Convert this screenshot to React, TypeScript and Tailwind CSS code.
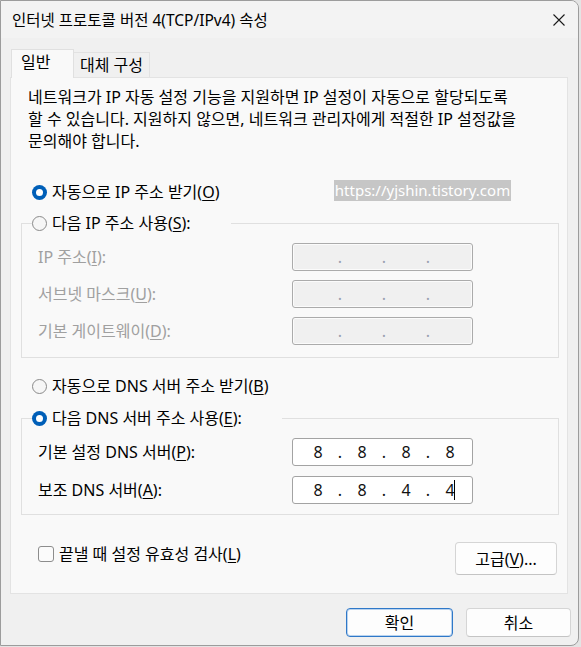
import React from "react";

function Radio({ on }: { on?: boolean }) {
  return on ? (
    <span className="w-[15px] h-[15px] rounded-full bg-[#005fb8] flex items-center justify-center shrink-0">
      <span className="w-[7px] h-[7px] rounded-full bg-white" />
    </span>
  ) : (
    <span className="w-[15px] h-[15px] rounded-full border border-[#8a8a8a] bg-[#f6f6f6] shrink-0" />
  );
}

function U({ c }: { c: string }) {
  return <span className="underline underline-offset-2">{c}</span>;
}

function IpField({ values, disabled, cursor }: { values?: string[]; disabled?: boolean; cursor?: boolean }) {
  const cells: React.ReactNode[] = [];
  for (let i = 0; i < 4; i++) {
    const last = i === 3;
    cells.push(
      <span key={"v" + i} className="w-[22px] text-center relative">
        {values ? values[i] : ""}
        {cursor && last ? <span className="absolute left-[15px] top-[1px] w-px h-[20px] bg-black" /> : null}
      </span>
    );
    if (!last)
      cells.push(
        <span key={"d" + i} className={disabled ? "w-[22px] text-center text-[#9aa0b0]" : "w-[22px] text-center"}>
          .
        </span>
      );
  }
  return (
    <div
      className={
        disabled
          ? "w-[181px] h-[28px] rounded-[3px] border border-[#ababab] bg-[#f0f0f0] shadow-[inset_0_0_0_1px_#fbfbfb] flex items-center pl-[14px] text-[16px] leading-[22px]"
          : "w-[181px] h-[28px] rounded-[3px] border border-[#a3a3a3] bg-white flex items-center pl-[14px] text-[16px] leading-[22px] text-[#111]"
      }
    >
      {cells}
    </div>
  );
}

export default function App() {
  return (
    <div className="w-[581px] h-[647px] bg-[#e4e4e4] relative font-['Noto_Sans','Noto_Sans_CJK_KR',sans-serif] text-[16px] text-black overflow-hidden">
      <div className="w-[579px] h-[646px] border border-[#9c9c9c] rounded-tr-[8px] rounded-br-[8px] bg-[#f0f0f0] flex flex-col overflow-hidden">
        {/* title bar */}
        <div className="h-[37px] bg-[#f3f3f3] flex items-center justify-between pl-[11px] pr-[13px] shrink-0">
          <span className="leading-[22px] text-[15.5px]">인터넷 프로토콜 버전 4(TCP/IPv4) 속성</span>
          <svg width="12" height="12" viewBox="0 0 12 12">
            <path d="M0.5 0.5 L11.5 11.5 M11.5 0.5 L0.5 11.5" stroke="#1a1a1a" strokeWidth="1.1" />
          </svg>
        </div>
        {/* tabs */}
        <div className="flex items-end pl-[10px] mt-[11px] h-[29px] relative z-10">
          <div className="h-[29px] w-[63px] bg-[#f9f9f9] border-l border-t border-r border-[#e0e0e0] pl-[9px] pt-[1px] leading-[22px]">
            일반
          </div>
          <div className="h-[25px] w-[76px] mb-px bg-[#f0f0f0] border-t border-r border-[#e2e2e2] pl-[6px] flex items-center leading-[22px] whitespace-nowrap">
            대체 구성
          </div>
        </div>
        {/* panel */}
        <div className="ml-[9px] w-[558px] h-[517px] -mt-px bg-[#f9f9f9] border border-[#e3e3e3] px-[10px] flex flex-col">
          <div className="ml-[7px] mt-[8px] leading-[22px] whitespace-nowrap">
            <div>네트워크가 IP 자동 설정 기능을 지원하면 IP 설정이 자동으로 할당되도록</div>
            <div>할 수 있습니다. 지원하지 않으면, 네트워크 관리자에게 적절한 IP 설정값을</div>
            <div>문의해야 합니다.</div>
          </div>

          <div className="mt-[29px] h-[22px] flex items-center pl-[11px] gap-[5px] leading-[22px]">
            <Radio on />
            <span>
              자동으로 IP 주소 받기(<U c="O" />)
            </span>
          </div>

          <fieldset className="mt-[9px] w-[538px] border border-[#e0e0e0] pt-[9px] pb-[12px] flex flex-col gap-[9px]">
            <legend className="ml-[10px] pr-[40px] h-[22px] flex items-center gap-[5px] leading-[22px]">
              <Radio />
              <span>
                다음 IP 주소 사용(<U c="S" />):
              </span>
            </legend>
            {[
              ["IP 주소(", "I", "):"],
              ["서브넷 마스크(", "U", "):"],
              ["기본 게이트웨이(", "D", "):"],
            ].map((l) => (
              <div key={l[0]} className="flex items-center h-[28px]">
                <span className="w-[270px] pl-[16px] text-[#a0a0a0] leading-[22px]">
                  {l[0]}
                  <U c={l[1]} />
                  {l[2]}
                </span>
                <IpField disabled />
              </div>
            ))}
          </fieldset>

          <div className="mt-[17px] h-[22px] flex items-center pl-[11px] gap-[5px] leading-[22px]">
            <Radio />
            <span>
              자동으로 DNS 서버 주소 받기(<U c="B" />)
            </span>
          </div>

          <fieldset className="mt-[10px] w-[538px] border border-[#e0e0e0] pt-[9px] pb-[10px] flex flex-col gap-[10px]">
            <legend className="ml-[10px] pr-[40px] h-[22px] flex items-center gap-[5px] leading-[22px]">
              <Radio on />
              <span>
                다음 DNS 서버 주소 사용(<U c="E" />):
              </span>
            </legend>
            <div className="flex items-center h-[28px]">
              <span className="w-[270px] pl-[16px] leading-[22px]">
                기본 설정 DNS 서버(<U c="P" />):
              </span>
              <IpField values={["8", "8", "8", "8"]} />
            </div>
            <div className="flex items-center h-[28px]">
              <span className="w-[270px] pl-[16px] leading-[22px]">
                보조 DNS 서버(<U c="A" />):
              </span>
              <IpField values={["8", "8", "4", "4"]} cursor />
            </div>
          </fieldset>

          <div className="mt-[27px] flex items-start justify-between">
            <div className="ml-[17px] mt-[1px] h-[22px] flex items-center gap-[5px] leading-[22px]">
              <span className="w-[16px] h-[16px] rounded-[3px] border border-[#8d8d8d] bg-[#fbfbfb]" />
              <span>
                끝낼 때 설정 유효성 검사(<U c="L" />)
              </span>
            </div>
            <div className="w-[102px] h-[33px] rounded-[4px] border border-[#d5d5d5] border-b-[#c4c4c4] bg-[#fdfdfd] flex items-center justify-center leading-[22px]">
              <span>
                고급(<U c="V" />)...
              </span>
            </div>
          </div>
        </div>
        {/* footer */}
        <div className="mt-[14px] flex justify-end gap-[13px] pr-[7px]">
          <div className="w-[107px] h-[29px] rounded-[4px] border border-[#2f78c8] shadow-[inset_0_0_0_1px_#b9d3ef] bg-[#fdfdfd] flex items-center justify-center leading-[22px]">
            확인
          </div>
          <div className="w-[105px] h-[29px] rounded-[4px] border border-[#d5d5d5] border-b-[#c4c4c4] bg-[#fdfdfd] flex items-center justify-center leading-[22px]">
            취소
          </div>
        </div>
      </div>
      {/* watermark */}
      <div className="absolute left-[334px] top-[180px] h-[21px] w-[177px] bg-[#c6c6c6] text-white text-[15px] leading-[21px] flex items-center justify-center whitespace-nowrap">
        https://yjshin.tistory.com
      </div>
    </div>
  );
}
